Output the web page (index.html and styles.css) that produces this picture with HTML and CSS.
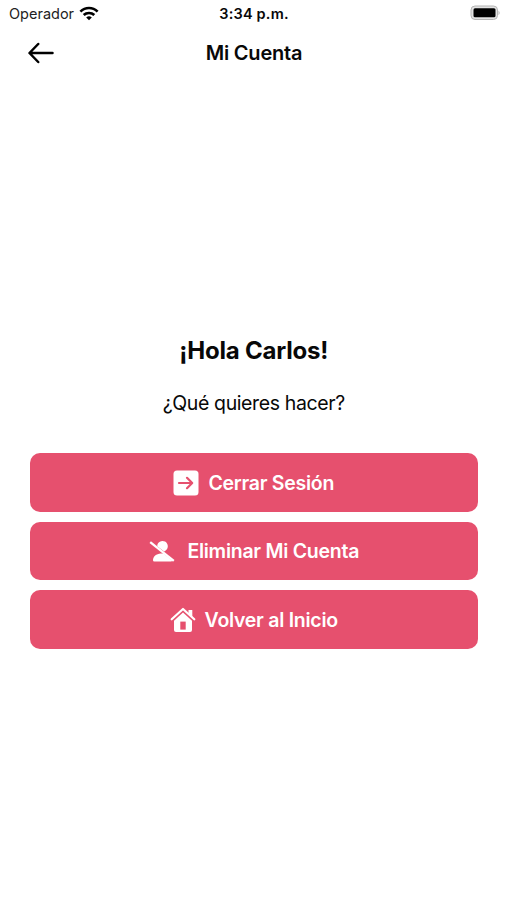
FILE: index.html
```html
<!DOCTYPE html>
<html lang="es">
<head>
<meta charset="utf-8">
<title>Mi Cuenta</title>
<link rel="stylesheet" href="styles.css">
</head>
<body>
<div class="status">
  <div class="carrier"><span>Operador</span>
    <svg class="wifi" width="20" height="15" viewBox="0 0 20 15" fill="none" stroke="#000" stroke-width="2.7"><path d="M1.4 5.6C6.3.8 13.7.8 18.6 5.6M4.7 9.1c3-2.8 7.6-2.8 10.6 0"/><path d="M10 14.2 7.2 11.5q2.8-2.3 5.6 0Z" fill="#000" stroke="none"/></svg>
  </div>
  <span class="time">3:34 p.m.</span>
  <svg class="battery" width="31" height="16" viewBox="0 0 31 16"><rect x="1" y="1" width="26.5" height="13.5" rx="4" fill="#e2e2e2" stroke="#b5b5b5"/><rect x="3.5" y="3.3" width="22" height="9" rx="1.5"/><path d="M28.5 5.4q2.4 2.4 0 4.8Z" fill="#b5b5b5"/></svg>
</div>
<header class="header">
  <svg class="back" width="28" height="24" viewBox="0 0 28 24" fill="none" stroke="#000" stroke-width="2.5" stroke-linecap="round" stroke-linejoin="round"><path d="M10.2 3 1.5 12l8.7 9M2 12H24.5"/></svg>
  <h1 class="title">Mi Cuenta</h1>
</header>
<main class="content">
  <h2 class="greeting">¡Hola Carlos!</h2>
  <p class="question">¿Qué quieres hacer?</p>
  <div class="actions">
    <button class="action logout">
      <svg width="26" height="26" viewBox="0 0 26 26"><rect x=".5" y=".5" width="25" height="25" rx="3.5" fill="#fff"/><path d="M6 13h13M14 7.8l5.2 5.2-5.2 5.2" fill="none" stroke="#e6506e" stroke-width="2.2" stroke-linecap="round" stroke-linejoin="round"/></svg>
      <span>Cerrar Sesión</span>
    </button>
    <button class="action remove">
      <svg width="28" height="26" viewBox="0 0 28 26"><path d="M9.2 8.2a5.3 5.3 0 1 1 8.2 4.5l-1.2.7Z" fill="#fff"/><path d="M5 22.3c0-4 3.3-6.5 7.8-6.9h2.4l9 7.2-.7.9H6.3q-1.3 0-1.3-1.2Z" fill="#fff"/><path d="m2.2 4.2 23.6 18.6" stroke="#fff" stroke-width="2.3"/></svg>
      <span>Eliminar Mi Cuenta</span>
    </button>
    <button class="action home">
      <svg width="26" height="26" viewBox="0 0 26 26"><path d="M18.5 3h3.8v7.2L18.5 7Z" fill="#fff"/><path d="M1.7 12.3 13 2l11.3 10.3" fill="none" stroke="#fff" stroke-width="2.2" stroke-linecap="round" stroke-linejoin="round"/><path d="M13 5.5 22 13.7V23q0 2-2 2H6q-2 0-2-2v-9.3Z" fill="#fff"/><rect x="10.3" y="14.6" width="5.4" height="8" fill="#e6506e"/></svg>
      <span>Volver al Inicio</span>
    </button>
  </div>
</main>
</body>
</html>
```

FILE: styles.css
```css
* { box-sizing: border-box; }
body {
  margin: 0;
  height: 900px;
  background: #fff;
  color: #080808;
  font-family: Inter, "Liberation Sans", sans-serif;
  display: flex;
  flex-direction: column;
  overflow: hidden;
}
h1, h2, p { margin: 0; white-space: nowrap; }
.status {
  height: 27px;
  padding: 0 6px 0 9px;
  display: grid;
  grid-template-columns: 1fr auto 1fr;
  align-items: center;
  font-size: 14.5px;
}
.carrier { display: flex; align-items: center; gap: 5px; color: #222; }
.wifi { margin-top: -1px; }
.time { font-weight: 600; letter-spacing: 0.2px; margin-right: 2px; }
.battery { justify-self: end; margin-top: -1px; }
.header {
  height: 51px;
  padding: 0 27px 0 28px;
  display: grid;
  grid-template-columns: 28px 1fr 28px;
  align-items: center;
}
.title { text-align: center; font-size: 20px; font-weight: 600; line-height: 24px; letter-spacing: -0.2px; }
.content {
  padding: 256px 29.5px 0 30px;
  display: flex;
  flex-direction: column;
  align-items: center;
}
.greeting { font-size: 24px; line-height: 33px; font-weight: 700; letter-spacing: -0.2px; }
.question { font-size: 19.5px; line-height: 26px; margin-top: 23px; letter-spacing: -0.38px; }
.actions {
  align-self: stretch;
  margin-top: 37.3px;
  display: flex;
  flex-direction: column;
  gap: 9.8px;
}
.action {
  height: 58.6px;
  padding: 0;
  border: 0;
  border-radius: 10px;
  background: #e6506e;
  color: #fff;
  display: flex;
  align-items: center;
  justify-content: center;
  gap: 9px;
  font: 600 19.5px/24px Inter, "Liberation Sans", sans-serif;
  letter-spacing: -0.26px;
}
.remove { gap: 11px; }
.home { padding-top: 1px; }
.action svg { flex: none; }
```
